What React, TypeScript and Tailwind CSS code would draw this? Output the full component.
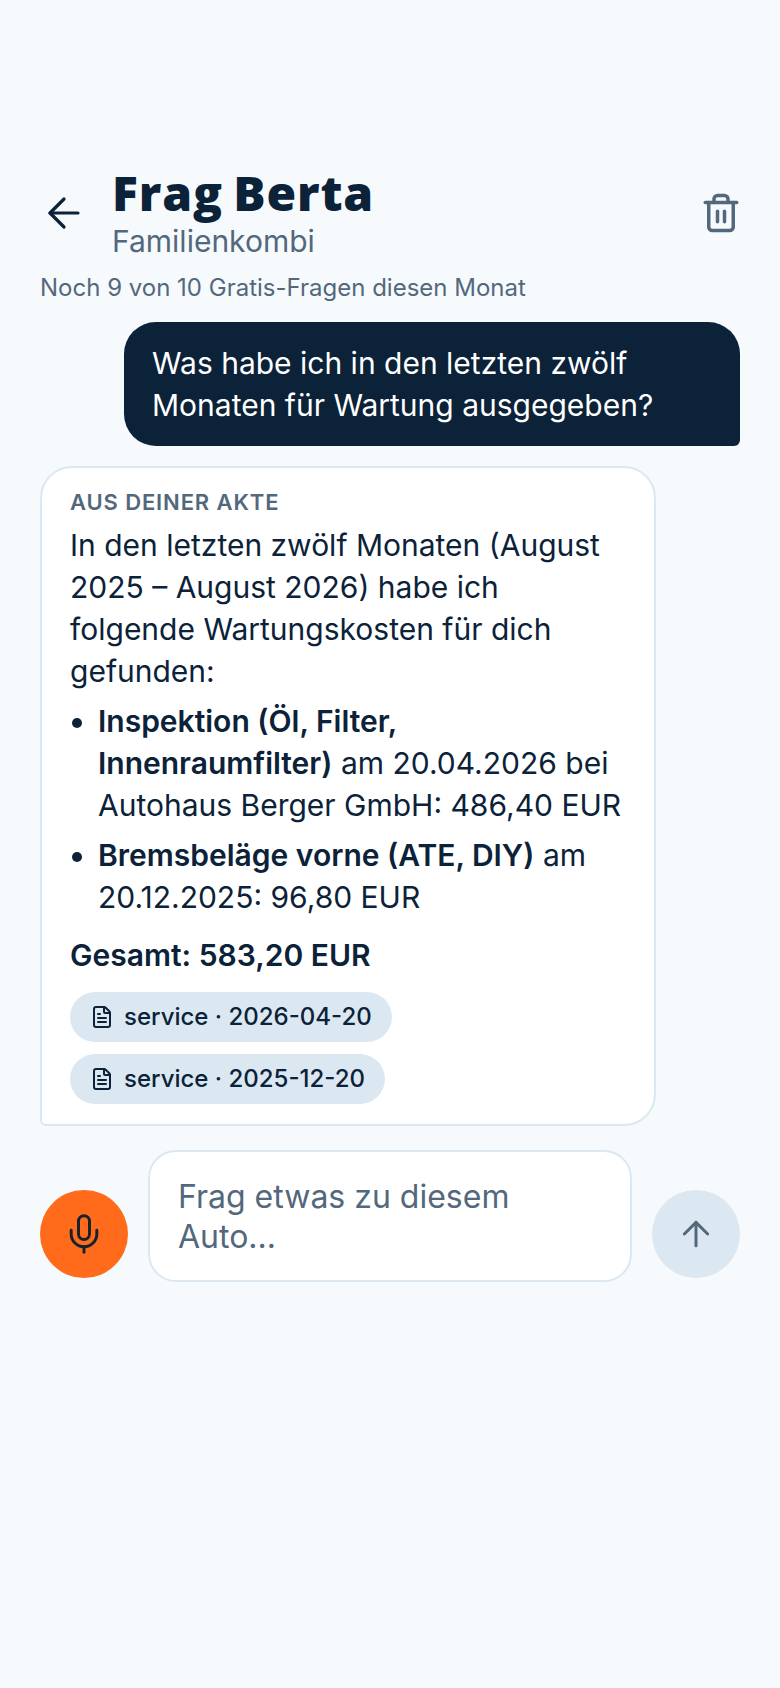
import React from "react";
import { ArrowLeft, Trash2, FileText, Mic, ArrowUp } from "lucide-react";

function Chip({ label }: { label: string }) {
  return (
    <div className="flex h-[50px] w-fit items-center gap-[10px] rounded-full bg-[#dce8f1] px-[20px] text-[24px] font-medium text-[#0b2239]">
      <FileText size={24} strokeWidth={2} />
      <span>{label}</span>
    </div>
  );
}

export default function App() {
  return (
    <div className="min-h-[1688px] bg-[#f6fafd] px-[40px] pt-[165px] font-['Inter',sans-serif] text-[#0b2239]">
      <header className="flex items-center">
        <ArrowLeft size={48} strokeWidth={1.6} className="mt-[2px] shrink-0" />
        <div className="ml-[24px] flex-1">
          <h1 className="font-['Open_Sans',sans-serif] text-[48px] font-extrabold leading-[56px] tracking-[0.018em] [word-spacing:-0.06em]">Frag Berta</h1>
          <p className="mt-[2px] text-[30px] leading-[36px] text-[#53687c]">Familienkombi</p>
        </div>
        <Trash2 size={42} strokeWidth={2} className="mr-[-2px] mt-[2px] text-[#53687c]" />
      </header>
      <p className="mt-[13px] text-[24px] leading-[32px] text-[#53687c]">Noch 9 von 10 Gratis-Fragen diesen Monat</p>
      <div className="mt-[18px] flex justify-end">
        <div className="w-[616px] rounded-[32px] rounded-br-[6px] bg-[#0b2239] px-[28px] py-[20px] text-[30px] leading-[42px] text-white">
          Was habe ich in den letzten zwölf Monaten für Wartung ausgegeben?
        </div>
      </div>
      <div className="mt-[20px] w-[616px] rounded-[32px] rounded-bl-[6px] border-2 border-[#dce8f1] bg-white px-[28px] pb-[20px] pt-[20px]">
        <p className="text-[22px] font-semibold leading-[28px] tracking-[0.04em] text-[#53687c]">AUS DEINER AKTE</p>
        <p className="mt-[8px] text-[30px] leading-[42px]">
          In den letzten zwölf Monaten (August 2025 – August 2026) habe ich folgende Wartungskosten für dich gefunden:
        </p>
        <ul className="mt-[8px] list-disc pl-[28px] text-[30px] leading-[42px]">
          <li><b className="font-semibold">Inspektion (Öl, Filter, Innenraumfilter)</b> am 20.04.2026 bei Autohaus Berger GmbH: 486,40 EUR</li>
          <li className="mt-[8px]"><b className="font-semibold">Bremsbeläge vorne (ATE, DIY)</b> am 20.12.2025: 96,80 EUR</li>
        </ul>
        <p className="mt-[16px] text-[30px] font-semibold leading-[42px]">Gesamt: 583,20 EUR</p>
        <div className="mt-[16px] flex flex-col gap-[12px]">
          <Chip label="service · 2026-04-20" />
          <Chip label="service · 2025-12-20" />
        </div>
      </div>
      <div className="mt-[24px] flex items-end gap-[20px]">
        <button className="mb-[4px] flex h-[88px] w-[88px] shrink-0 items-center justify-center rounded-full bg-[#ff6b1a] text-[#14222f]">
          <Mic size={44} strokeWidth={1.6} />
        </button>
        <div className="h-[132px] flex-1 rounded-[28px] border-2 border-[#dce8f1] bg-white px-[28px] py-[25px] text-[32px] leading-[40px] text-[#53687c]">
          Frag etwas zu diesem Auto...
        </div>
        <button className="mb-[4px] flex h-[88px] w-[88px] shrink-0 items-center justify-center rounded-full bg-[#dce8f1] text-[#53687c]">
          <ArrowUp size={40} strokeWidth={1.8} />
        </button>
      </div>
    </div>
  );
}
